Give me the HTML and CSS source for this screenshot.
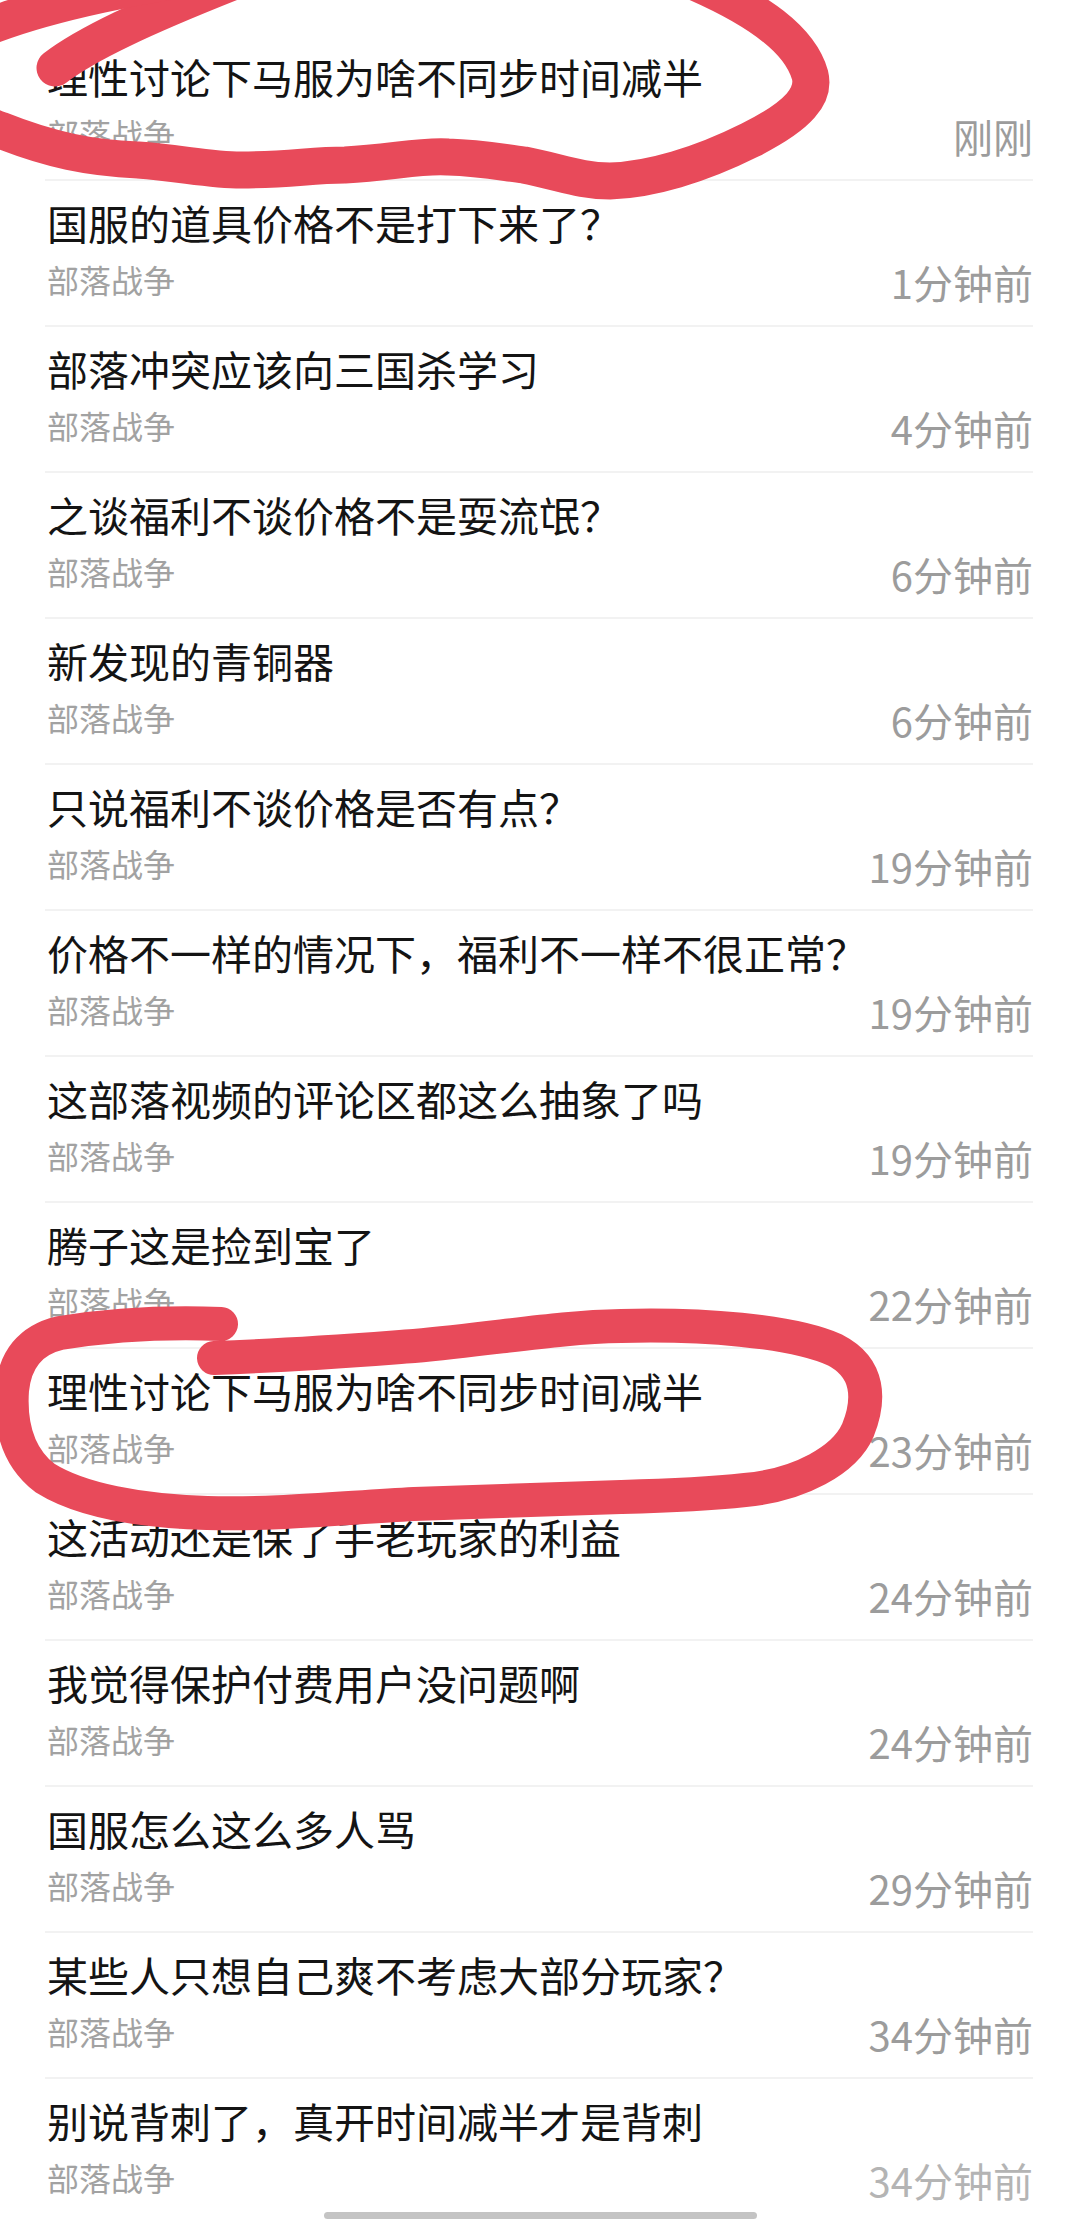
FILE: index.html
```html
<!DOCTYPE html>
<html lang="zh-CN">
<head>
<meta charset="utf-8">
<title>部落战争</title>
<link rel="stylesheet" href="styles.css">
</head>
<body>
<div class="page">
  <ul class="list">
    <li class="row"><div class="title">理性讨论下马服为啥不同步时间减半</div><div class="meta"><span class="tag">部落战争</span><span class="time">刚刚</span></div></li>
    <li class="row"><div class="title">国服的道具价格不是打下来了？</div><div class="meta"><span class="tag">部落战争</span><span class="time">1分钟前</span></div></li>
    <li class="row"><div class="title">部落冲突应该向三国杀学习</div><div class="meta"><span class="tag">部落战争</span><span class="time">4分钟前</span></div></li>
    <li class="row"><div class="title">之谈福利不谈价格不是耍流氓？</div><div class="meta"><span class="tag">部落战争</span><span class="time">6分钟前</span></div></li>
    <li class="row"><div class="title">新发现的青铜器</div><div class="meta"><span class="tag">部落战争</span><span class="time">6分钟前</span></div></li>
    <li class="row"><div class="title">只说福利不谈价格是否有点？</div><div class="meta"><span class="tag">部落战争</span><span class="time">19分钟前</span></div></li>
    <li class="row"><div class="title">价格不一样的情况下，福利不一样不很正常？</div><div class="meta"><span class="tag">部落战争</span><span class="time">19分钟前</span></div></li>
    <li class="row"><div class="title">这部落视频的评论区都这么抽象了吗</div><div class="meta"><span class="tag">部落战争</span><span class="time">19分钟前</span></div></li>
    <li class="row"><div class="title">腾子这是捡到宝了</div><div class="meta"><span class="tag">部落战争</span><span class="time">22分钟前</span></div></li>
    <li class="row"><div class="title">理性讨论下马服为啥不同步时间减半</div><div class="meta"><span class="tag">部落战争</span><span class="time">23分钟前</span></div></li>
    <li class="row"><div class="title">这活动还是保了手老玩家的利益</div><div class="meta"><span class="tag">部落战争</span><span class="time">24分钟前</span></div></li>
    <li class="row"><div class="title">我觉得保护付费用户没问题啊</div><div class="meta"><span class="tag">部落战争</span><span class="time">24分钟前</span></div></li>
    <li class="row"><div class="title">国服怎么这么多人骂</div><div class="meta"><span class="tag">部落战争</span><span class="time">29分钟前</span></div></li>
    <li class="row"><div class="title">某些人只想自己爽不考虑大部分玩家？</div><div class="meta"><span class="tag">部落战争</span><span class="time">34分钟前</span></div></li>
    <li class="row"><div class="title">别说背刺了，真开时间减半才是背刺</div><div class="meta"><span class="tag">部落战争</span><span class="time time-faded">34分钟前</span></div></li>
  </ul>

  <svg class="marks" viewBox="0 0 1080 2220" width="1080" height="2220" aria-hidden="true">
    <g fill="none" stroke="#e84a5a" stroke-linecap="round" stroke-linejoin="round">
      <path stroke-width="37" d="M55 68 C 85 45, 140 18, 250 -25"/>
      <path stroke-width="37" d="M260 -30 C 150 -20, 40 5, -20 30 C -60 50, -60 110, 0 130 C 50 150, 90 158, 138 160 C 180 163, 210 170, 241 170 C 290 170, 310 165, 345 165 C 390 163, 420 155, 448 157 C 480 158, 500 162, 524 165 C 560 172, 580 181, 610 181 C 650 180, 700 165, 750 140 C 800 115, 815 95, 810 75 C 800 40, 760 10, 690 -20"/>
      <path stroke-width="34" d="M214 1358 C 300 1355, 360 1350, 414 1346 C 500 1338, 560 1327, 621 1326 C 700 1324, 790 1330, 835 1350 C 870 1368, 870 1400, 858 1430 C 845 1460, 800 1485, 745 1490 C 700 1495, 660 1496, 621 1497 C 540 1500, 470 1502, 414 1504 C 340 1508, 270 1515, 207 1513 C 140 1511, 80 1500, 45 1478 C 15 1455, 10 1420, 12 1390 C 15 1360, 30 1340, 60 1333 C 110 1325, 170 1322, 221 1324"/>
    </g>
  </svg>

  <div class="home-bar"></div>
</div>
</body>
</html>
```

FILE: styles.css
```css
html, body {
  margin: 0;
  padding: 0;
  background: #ffffff;
}

body {
  width: 1080px;
  height: 2220px;
  overflow: hidden;
  font-family: "Noto Sans CJK SC", "Noto Sans", "Liberation Sans", sans-serif;
}

.page {
  position: relative;
  width: 1080px;
  height: 2220px;
  overflow: hidden;
}

.list {
  list-style: none;
  margin: 0;
  padding: 35px 0 0 0;
}

.row {
  box-sizing: border-box;
  height: 146px;
  margin: 0 47px 0 45px;
  padding: 16px 0 0 2px;
  border-bottom: 2px solid #f2f2f2;
}

.title {
  font-size: 41px;
  line-height: 50px;
  color: #141414;
  white-space: nowrap;
}

.meta {
  display: flex;
  justify-content: space-between;
  align-items: flex-start;
  margin-top: 12px;
}

.tag {
  font-size: 32px;
  line-height: 40px;
  color: #a2a2a2;
}

.time {
  font-size: 40px;
  line-height: 44px;
  margin-top: 1px;
  color: #9c9c9c;
}

.time-faded {
  color: #b4b4b4;
}

.marks {
  position: absolute;
  top: 0;
  left: 0;
  pointer-events: none;
}

.home-bar {
  position: absolute;
  left: 324px;
  top: 2212px;
  width: 433px;
  height: 7px;
  border-radius: 4px;
  background: #c4c4c4;
}
```
